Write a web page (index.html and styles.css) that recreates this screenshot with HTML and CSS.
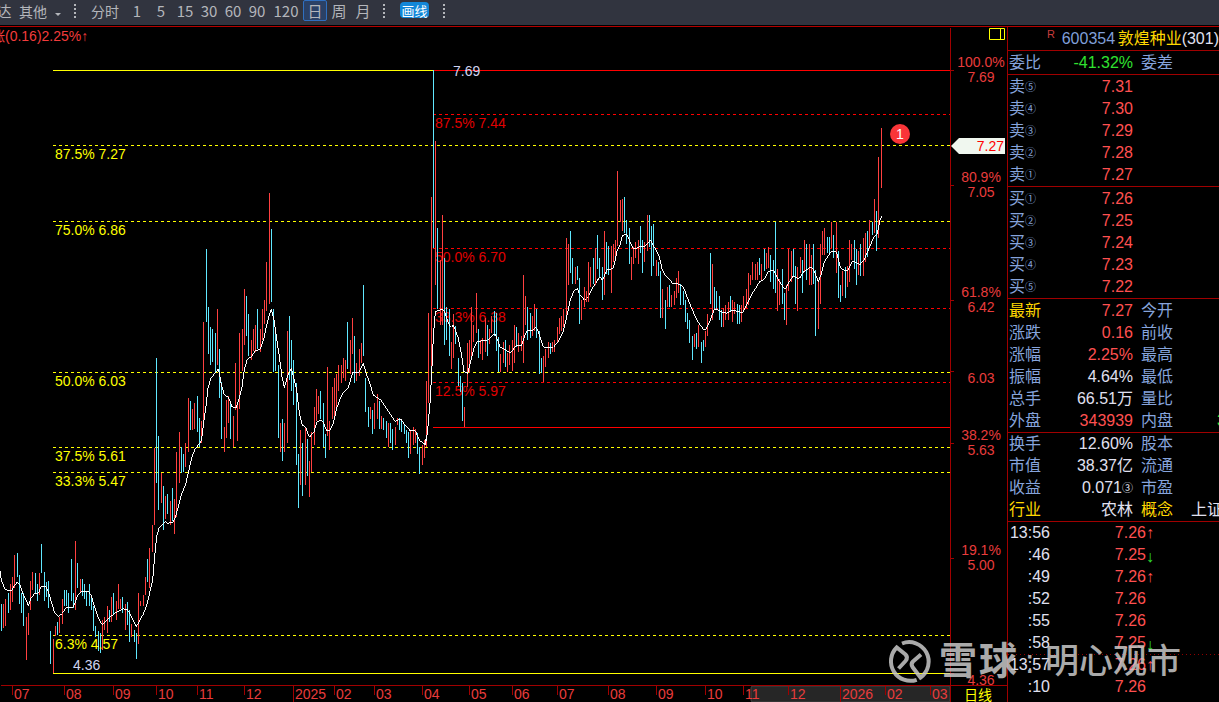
FILE: index.html
```html
<!DOCTYPE html>
<html lang="zh-CN">
<head>
<meta charset="utf-8">
<title>600354 敦煌种业</title>
<meta name="viewport" content="width=device-width, initial-scale=1">
<link rel="stylesheet" href="styles.css">
</head>
<body>
<nav class="toolbar">
  <button class="tool tool-cut">达</button>
  <button class="tool tool-menu">其他</button>
  <button class="tool tool-caret" aria-label="更多"><svg width="6" height="4" viewBox="0 0 6 4"><path d="M0 0H6L3 3Z" fill="currentColor"/></svg></button>
  <span class="grip"></span>
  <button class="tool tool-wide">分时</button>
  <button class="tool">1</button>
  <button class="tool">5</button>
  <button class="tool">15</button>
  <button class="tool">30</button>
  <button class="tool">60</button>
  <button class="tool">90</button>
  <button class="tool tool-120">120</button>
  <button class="tool tool-active">日</button>
  <button class="tool">周</button>
  <button class="tool">月</button>
  <span class="grip"></span>
  <button class="pill">画线</button>
  <span class="grip"></span>
</nav>
<main class="workspace">
  <section class="chart">
    <svg class="plot" viewBox="0 27 1007 675" preserveAspectRatio="xMinYMin meet" role="img" aria-label="日线">
      <rect class="scroll" x="751" y="686" width="199" height="16" rx="2"/>
      <g class="frame" transform="translate(.5 .5)">
        <path d="M950 27V702M0 685H1007M950 70H953M950 185H953M950 300H953M950 371H953M950 443H953M950 558H953M950 673H953"/>
        <path d="M12 685V694M64 685V694M113 685V694M156 685V694M197 685V694M244 685V694M293 685V702M334 685V694M374 685V694M422 685V694M469 685V694M512 685V694M557 685V694M608 685V694M656 685V694M705 685V694M743 685V694M788 685V694M840 685V702M885 685V694M930 685V694"/>
      </g>
      <g class="level" transform="translate(0 .5)">
        <path class="yellow dashed" d="M53 145H950M53 221H950M53 372H950M53 447H950M53 472H950M53 635H950"/>
        <path class="red dashed" d="M433 114H950M433 248H950M433 308H950M433 382H950"/>
        <path class="yellow" d="M53 70H433M53 673H950"/>
        <path class="red" d="M433 70H950M433 427H950"/>
      </g>
      <g class="label red-text">
        <text x="435" y="128">87.5% 7.44</text>
        <text x="435" y="262">50.0% 6.70</text>
        <text x="435" y="322">33.3% 6.38</text>
        <text x="435" y="396">12.5% 5.97</text>
      </g>
      <g class="bars" transform="translate(0 500) scale(.333333)">
        <path class="up" d="M10 312V383M16 297V378M31 252V330M37 231V306M43 165V264M79 351V480M85 339V405M91 243V330M97 216V270M118 219V285M160 417V520M166 378V408M178 351V399M187 297V372M226 123V330M241 237V279M307 360V450M313 351V390M322 318V399M334 291V366M349 303V360M355 252V327M361 297V327M376 312V390M394 372V411M415 279V432M421 303V318M430 285V318M436 231V285M448 144V264M457 75V156"/>
        <path class="down" d="M4 312V392M25 279V339M52 159V231M58 225V312M64 279V339M70 279V378M106 219V282M112 252V303M124 132V219M133 216V303M139 246V291M145 243V324M151 393V492M172 366V405M193 270V318M199 270V318M205 279V339M214 177V303M220 279V324M232 189V264M247 237V288M253 252V297M259 273V318M268 252V318M274 288V330M280 318V393M286 378V411M295 393V453M301 399V459M328 330V366M340 279V342M367 291V339M382 306V375M388 330V426M403 390V426M409 399V477M442 177V246"/>
        <polyline class="average" points="0,213 4,240 13,264 22,272 34,272 43,258 52,246 60,256 70,285 78,300 85,317 92,296 103,282 115,279 124,260 137,258 145,276 154,305 163,336 175,350 187,340 199,322 220,322 232,288 243,275 265,273 274,288 283,318 295,355 307,374 318,364 334,348 352,335 370,327 382,328 391,345 403,369 409,380 418,364 430,342 442,310 451,270 458,240 463,180"/>
      </g>
      <g class="bars" transform="translate(140 340) scale(.333333)">
        <path class="up" d="M43 324V555M64 399V489M76 468V537M91 483V555M103 477V582M109 336V531M118 276V429M136 309V381M145 174V336M157 207V270M163 189V267M184 243V309M190 -54V240M232 -93V75M253 261V336M259 180V294M265 168V249M280 228V321M286 69V210M292 186V303M298 -21V207M307 -33V93M313 -153V15M334 0V60M340 -33V33M346 -45V36M361 -33V36M367 -93V0M373 -120V-48M379 -234V-87M388 -441V-108M421 249V336M433 249V336M442 -27V309M481 270V435M496 264V435M508 363V471M514 276V396M523 201V315M529 147V243M535 168V222M562 81V288M568 243V330M577 141V237M583 114V240M589 102V210M595 75V153M604 75V129M610 54V114M616 60V123M631 0V102M637 -66V42M649 69V123M658 27V108M664 9V69M691 201V237M703 189V267M712 162V237M724 228V267M745 249V321M766 261V315M772 234V255M811 273V342M820 261V315M826 267V309M847 315V375M853 300V354M859 123V321"/>
        <path class="down" d="M49 54V429M55 288V510M70 438V570M82 462V522M97 444V543M124 321V399M130 342V396M151 183V270M172 168V276M178 234V321M199 -273V-54M205 -99V42M211 -39V75M217 -33V66M226 -21V99M238 27V174M244 126V297M271 186V297M319 -132V-12M325 -78V48M352 -93V27M394 -333V-114M400 -93V96M406 -27V93M415 75V294M427 237V363M448 -72V120M454 0V153M460 60V195M469 129V375M475 342V504M487 309V468M502 297V408M541 153V237M550 189V321M556 282V354M622 -54V87M643 -12V129M670 -165V48M676 114V216M685 201V261M697 210V282M718 183V267M730 234V270M739 243V294M751 249V309M757 267V330M778 234V270M784 237V276M793 255V282M799 270V309M805 276V354M832 279V342M838 321V402"/>
        <polyline class="average" points="43,660 50,590 57,565 66,556 76,545 84,550 100,546 109,522 118,488 125,462 136,436 147,390 156,350 165,328 184,303 192,240 199,190 204,145 212,115 225,100 234,88 238,100 243,130 252,162 266,174 276,200 288,204 296,180 306,140 313,90 321,60 336,48 346,33 361,27 372,-5 380,-45 388,-75 394,-93 402,-60 410,-5 418,50 426,110 433,143 442,110 454,84 460,110 470,150 478,220 487,255 497,262 508,292 522,275 531,246 541,240 550,246 560,273 568,273 580,250 590,205 605,165 625,142 638,97 658,96 670,69 678,100 688,125 700,165 722,180 740,206 765,244 782,237 795,255 811,273 826,273 838,300 854,314 862,280"/>
      </g>
      <g class="bars" transform="translate(400 220) scale(.333333)">
        <path class="up" d="M85 279V549M94 -69V453M106 -237V195M121 120V315M127 -15V315M154 366V447M160 282V414M193 561V621M202 369V501M208 360V459M214 261V420M220 315V366M229 219V339M241 360V402M247 354V420M256 294V396M268 327V372M274 288V339M301 402V456M310 366V429M322 399V456M328 375V435M337 360V453M343 315V429M355 339V396M364 348V393M370 165V429M376 228V315M397 288V348M403 252V333M430 408V486M436 387V441M445 366V414M457 366V396M463 360V396M472 321V366M478 294V342M484 288V333M490 267V321M499 54V288"/>
        <path class="down" d="M100 -450V84M112 24V267M133 114V375M139 261V360M148 267V408M166 318V372M175 414V498M181 468V516M187 489V603M235 327V414M262 315V408M283 273V348M289 279V393M295 351V456M316 360V441M349 321V381M382 261V360M391 279V354M409 267V354M418 333V462M424 414V459M451 369V402"/>
        <polyline class="average" points="76,674 82,640 90,550 95,460 100,350 106,275 128,267 136,280 145,310 154,322 160,315 175,355 184,400 192,455 203,460 212,425 222,385 232,364 262,361 280,343 287,345 300,381 315,388 331,400 347,378 365,375 380,332 398,330 407,321 415,335 430,381 460,382 475,365 490,333 499,295 511,240 520,216 532,205 540,225 553,240 565,230 580,200 600,171"/>
      </g>
      <g class="bars" transform="translate(540 150) scale(.333333)">
        <path class="up" d="M85 282V405M106 351V402M124 450V510M133 411V471M139 423V456M145 336V456M151 351V411M166 294V405M193 243V435M214 288V429M220 282V336M226 270V324M232 63V288M241 150V216M247 147V243M274 321V390M280 291V342M286 276V324M295 270V342M313 276V336M322 195V303M349 330V378M367 417V504M382 411V471M394 435V471M403 423V465M409 384V444M415 363V429M463 552V591M475 525V591M496 543V591M502 492V558M517 342V510"/>
        <path class="down" d="M91 243V369M97 324V402M112 348V390M118 384V522M160 324V402M172 255V357M178 324V381M187 351V450M199 276V372M205 288V375M253 141V249M259 210V282M268 234V342M301 228V309M307 270V369M328 195V291M334 228V378M340 222V348M355 336V378M361 363V504M376 450V537M388 405V471M421 402V465M430 423V465M436 450V516M442 489V537M448 510V579M457 558V630M469 549V597M484 576V639M490 570V603M511 309V462M523 411V480M529 423V480M538 438V510"/>
        <polyline class="average" points="172,390 180,381 187,391 201,360 220,355 232,300 240,285 247,258 260,252 270,275 279,294 288,297 300,288 315,289 331,270 345,295 358,320 367,360 375,375 400,402 415,402 430,410 440,438 455,475 470,510 490,538 498,537 511,510 522,480 532,477 540,484"/>
      </g>
      <g class="bars" transform="translate(720 120) scale(.333333)">
        <path class="up" d="M10 564V621M16 555V600M25 546V600M37 540V606M43 546V582M64 555V606M70 528V576M79 507V564M85 459V555M91 465V495M97 426V480M106 432V480M112 426V480M124 432V480M139 399V447M145 381V444M172 447V573M178 477V555M199 495V615M205 387V513M214 393V486M232 441V573M241 411V459M253 360V453M268 372V495M274 405V495M295 483V627M301 372V552M307 333V405M313 324V405M334 306V384M349 306V459M367 453V528M382 438V501M388 360V486M394 372V420M415 393V465M430 354V468M436 339V426M448 300V387M463 237V339M475 111V354M484 24V204"/>
        <path class="down" d="M4 570V621M31 528V573M52 552V612M58 555V612M118 414V465M133 387V453M151 405V486M160 420V507M166 306V519M187 447V552M193 519V600M220 387V471M226 438V552M247 420V519M259 372V480M280 372V492M286 450V648M322 351V399M328 351V405M340 345V414M355 393V534M361 495V546M376 441V534M403 360V447M409 387V495M421 372V468M442 333V411M457 306V345M469 273V393"/>
        <polyline class="average" points="0,574 20,580 38,570 68,578 82,550 100,515 120,484 132,478 145,455 160,450 170,470 178,484 195,508 205,490 220,468 232,475 241,473 250,456 272,441 280,448 295,485 303,465 313,425 334,394 349,395 362,445 375,452 385,450 395,426 403,424 420,434 432,420 445,390 460,355 472,340 480,300 485,288"/>
      </g>
      <g class="label yellow-text">
        <text x="55" y="159">87.5% 7.27</text>
        <text x="55" y="235">75.0% 6.86</text>
        <text x="55" y="386">50.0% 6.03</text>
        <text x="55" y="461">37.5% 5.61</text>
        <text x="55" y="486">33.3% 5.47</text>
        <text x="55" y="649">6.3% 4.57</text>
      </g>
      <g class="label pale-text">
        <text x="453" y="76">7.69</text>
        <text x="73" y="670">4.36</text>
      </g>
      <text class="label change-text" x="-9" y="41">涨(0.16)2.25%↑</text>
      <circle cx="900" cy="134" r="10" fill="#fa3538"/>
      <text class="badge" x="900" y="139">1</text>
      <g class="label price">
        <text x="981" y="67">100.0%</text><text x="981" y="82">7.69</text>
        <text x="981" y="182">80.9%</text><text x="981" y="197">7.05</text>
        <text x="981" y="297">61.8%</text><text x="981" y="312">6.42</text>
        <text x="981" y="383">6.03</text>
        <text x="981" y="440">38.2%</text><text x="981" y="455">5.63</text>
        <text x="981" y="555">19.1%</text><text x="981" y="570">5.00</text>
        <text x="981" y="685">4.36</text>
      </g>
      <path d="M951 146L959 138H1005V154H959Z" fill="#f0f7ef"/>
      <text class="label flag" x="1004" y="151">7.27</text>
      <path d="M989.500 28.500H1004.500V39.500H989.500ZM1000.500 28.500V39.500" fill="none" stroke="#ff0"/>
      <g class="label date">
        <text x="14" y="699">07</text><text x="66" y="699">08</text><text x="115" y="699">09</text><text x="158" y="699">10</text><text x="199" y="699">11</text><text x="246" y="699">12</text><text x="295" y="699">2025</text><text x="336" y="699">02</text><text x="376" y="699">03</text><text x="424" y="699">04</text><text x="471" y="699">05</text><text x="514" y="699">06</text><text x="559" y="699">07</text><text x="610" y="699">08</text><text x="658" y="699">09</text><text x="707" y="699">10</text><text x="745" y="699">11</text><text x="790" y="699">12</text><text x="842" y="699">2026</text><text x="887" y="699">02</text><text x="932" y="699">03</text>
      </g>
      <text class="label yellow-text" x="964" y="700">日线</text>
    </svg>
  </section>
  <aside class="quote">
    <h1 class="stock"><sup class="mark">R</sup><span class="code">600354</span><span class="name">敦煌种业</span><span class="sector">(301)</span></h1>
    <table class="block">
      <colgroup><col class="c1"><col class="c2"><col class="c3"><col></colgroup>
      <tr><th>委比</th><td class="green">-41.32%</td><th class="second">委差</th><td></td></tr>
    </table>
    <table class="block">
      <colgroup><col class="c1"><col class="c2"><col></colgroup>
      <tr><th>卖<small>⑤</small></th><td class="rise">7.31</td><td></td></tr>
      <tr><th>卖<small>④</small></th><td class="rise">7.30</td><td></td></tr>
      <tr><th>卖<small>③</small></th><td class="rise">7.29</td><td></td></tr>
      <tr><th>卖<small>②</small></th><td class="rise">7.28</td><td></td></tr>
      <tr><th>卖<small>①</small></th><td class="rise">7.27</td><td></td></tr>
    </table>
    <table class="block">
      <colgroup><col class="c1"><col class="c2"><col></colgroup>
      <tr><th>买<small>①</small></th><td class="rise">7.26</td><td></td></tr>
      <tr><th>买<small>②</small></th><td class="rise">7.25</td><td></td></tr>
      <tr><th>买<small>③</small></th><td class="rise">7.24</td><td></td></tr>
      <tr><th>买<small>④</small></th><td class="rise">7.23</td><td></td></tr>
      <tr><th>买<small>⑤</small></th><td class="rise">7.22</td><td></td></tr>
    </table>
    <table class="block">
      <colgroup><col class="c1"><col class="c2"><col class="c3"><col></colgroup>
      <tr><th class="gold">最新</th><td class="rise">7.27</td><th class="second">今开</th><td></td></tr>
      <tr><th>涨跌</th><td class="rise">0.16</td><th class="second">前收</th><td></td></tr>
      <tr><th>涨幅</th><td class="rise">2.25%</td><th class="second">最高</th><td></td></tr>
      <tr><th>振幅</th><td>4.64%</td><th class="second">最低</th><td></td></tr>
      <tr><th>总手</th><td>66.51万</td><th class="second">量比</th><td></td></tr>
      <tr><th>外盘</th><td class="rise">343939</td><th class="second">内盘</th><td class="green far">3</td></tr>
    </table>
    <table class="block tight">
      <colgroup><col class="c1"><col class="c2"><col class="c3"><col></colgroup>
      <tr><th>换手</th><td>12.60%</td><th class="second">股本</th><td></td></tr>
      <tr><th>市值</th><td>38.37亿</td><th class="second">流通</th><td></td></tr>
      <tr><th>收益</th><td>0.071<small>③</small></td><th class="second">市盈</th><td></td></tr>
      <tr><th class="gold">行业</th><td>农林</td><th class="second gold">概念</th><td class="near">上证</td></tr>
    </table>
    <table class="ticks">
      <colgroup><col class="t1"><col class="t2"><col></colgroup>
      <tr><td>13:56</td><td class="rise">7.26</td><td class="arrow rise">↑</td></tr>
      <tr><td>:46</td><td class="rise">7.25</td><td class="arrow green low">↓</td></tr>
      <tr><td>:49</td><td class="rise">7.26</td><td class="arrow rise">↑</td></tr>
      <tr><td>:52</td><td class="rise">7.26</td><td></td></tr>
      <tr><td>:55</td><td class="rise">7.26</td><td></td></tr>
      <tr><td>:58</td><td class="rise">7.25</td><td class="arrow green low">↓</td></tr>
      <tr class="minute"><td>13:57</td><td class="rise">7.26</td><td class="arrow rise">↑</td></tr>
      <tr><td>:10</td><td class="rise">7.26</td><td></td></tr>
    </table>
  </aside>
  <svg class="watermark" width="300" height="50" viewBox="0 0 300 50" role="img" aria-label="雪球：明心观市">
    <g fill="none" stroke="#c8c8c8" stroke-width="4">
      <path d="M11.500 32.500L18.500 25Q21.500 21.500 18.500 18.500L9.700 11.500A19.500 19.500 0 0 0 29.700 43.800"/>
      <path d="M34 18.500L26 25.500Q23.500 28 25.500 31L33.500 41.500A19.500 19.500 0 0 0 15 7.500"/>
    </g>
    <text class="brand" x="52" y="38">雪</text>
    <text class="brand" x="92" y="38">球</text>
    <text class="author" x="138" y="37">:</text>
    <text class="author" x="158" y="37">明心观市</text>
  </svg>
</main>
</body>
</html>
```
FILE: styles.css
```css
* { box-sizing: border-box; }
body {
  margin: 0;
  min-height: 100vh;
  display: flex;
  flex-direction: column;
  overflow: hidden;
  background: #000;
  color: #e0e0f0;
  font: 16px/22px "Liberation Sans", "Noto Sans CJK SC", sans-serif;
}
button { border: 0; padding: 0; background: none; color: inherit; font: inherit; }

.toolbar {
  display: flex;
  align-items: flex-start;
  height: 25px;
  background: #31343f;
  color: #b4b6bb;
  font: 15px/20px "Noto Sans CJK SC", sans-serif;
  white-space: nowrap;
}
.tool { width: 24px; height: 21px; flex: none; }
.tool-cut { margin-left: -8px; }
.tool-menu { width: 34px; font-size: 14px; }
.tool-caret { width: 16px; line-height: 12px; }
.tool-wide { width: 40px; font-size: 14px; }
.tool-120 { width: 34px; }
.tool-active { border: 1px solid #2f6fc0; border-radius: 2px; background: #2b4166; line-height: 18px; }
.grip {
  width: 2px;
  height: 14px;
  margin: 4px 9px 0 8px;
  flex: none;
  background: repeating-linear-gradient(#b4b6bb 0 2px, transparent 2px 4px);
}
.pill { width: 29px; height: 16px; margin: 2px 6px 0; border-radius: 4px; background: #1287d8; color: #fff; font-size: 13px; line-height: 15px; }

.workspace {
  position: relative;
  display: flex;
  flex: 1;
  margin-top: 1px;
  border-top: 1px solid #b40000;
}
.chart { flex: 1; min-width: 0; }
.plot { display: block; width: 100%; }
.frame { fill: none; stroke: #a00000; shape-rendering: crispEdges; }
.scroll { fill: #262626; stroke: #444; }
.level { fill: none; shape-rendering: crispEdges; }
.dashed { stroke-dasharray: 3 3; }
.yellow { stroke: #ff0; }
.red { stroke: #f00; }
.bars { fill: none; stroke-width: 3; shape-rendering: crispEdges; }
.up { stroke: #ff4040; }
.down { stroke: #60e8ff; }
.average { stroke: #fff; }
.label { font-size: 14px; }
.yellow-text { fill: #ff0; }
.red-text { fill: #e00000; }
.pale-text { fill: #d0d4f0; }
.change-text { fill: #f23c3c; }
.price { fill: #e83c3c; text-anchor: middle; }
.date { fill: #e83c3c; }
.flag { fill: #f00; text-anchor: end; }
.badge { fill: #fff; font-size: 14px; text-anchor: middle; }

.quote { width: 212px; flex: none; overflow: hidden; border-left: 1px solid #a00000; }
.stock {
  display: flex;
  margin: 0;
  height: 24px;
  padding-left: 39px;
  border-bottom: 1px solid #a00000;
  font-size: 16px;
  font-weight: 400;
  line-height: 24px;
  white-space: nowrap;
}
.mark { width: 15px; color: #c83c3c; font-size: 11px; line-height: 14px; }
.code { width: 57px; color: #7f9fd8; }
.name { color: #ffd800; }
.block, .ticks { width: 100%; table-layout: fixed; border-spacing: 0; white-space: nowrap; }
.block { padding-top: 1px; border-bottom: 1px solid #a00000; }
.tight { padding-top: 0; }
.c1 { width: 36px; }
.c2 { width: 89px; }
.c3 { width: 58px; }
.t1 { width: 42px; }
.t2 { width: 96px; }
th, td { height: 22px; padding: 0; line-height: 22px; font-weight: 400; text-align: right; }
th { padding-left: 1px; color: #86a4dc; text-align: left; }
.second { padding-left: 8px; }
small { font-size: 11px; vertical-align: 1px; line-height: 11px; }
.rise { color: #ff5050; }
.green { color: #30e030; }
.gold { color: #ffd800; }
.near { text-align: left; }
.far { padding-left: 26px; text-align: left; }
.arrow { text-align: left; font-size: 16px; }
.low { padding-top: 4px; line-height: 18px; }
.minute td { background: repeating-linear-gradient(90deg, #900000 0 1px, transparent 1px 4px) top / 100% 1px no-repeat; }

.watermark { position: absolute; right: 32px; bottom: 16px; opacity: .85; }
.brand { fill: #c8c8c8; font-size: 38px; font-weight: 700; }
.author { fill: #c8c8c8; font-size: 34px; font-weight: 500; }
```
